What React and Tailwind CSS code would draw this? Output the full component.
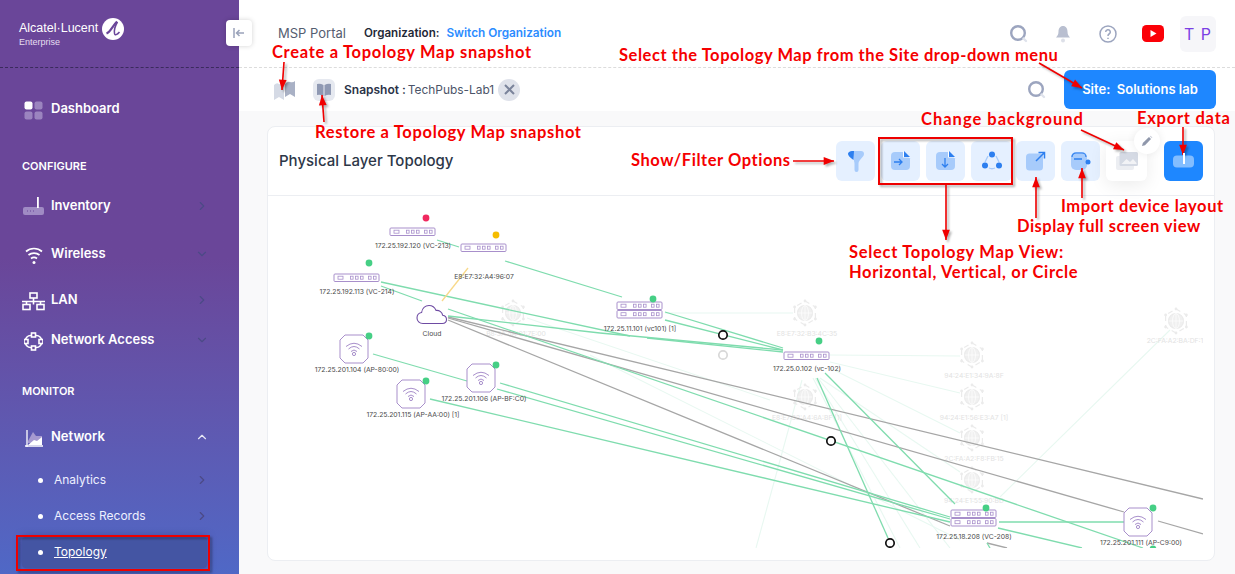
import React from "react";
import { ChevronRight, ChevronDown, ChevronUp } from "lucide-react";

const SW = "#a88fcb";
const GREEN = "#7fdcae";
const GRAY = "#a6a6a6";
const FAINT = "#e8f8f1";

function SwitchBox({ x, y }) {
  return (
    <g fill="none" stroke={SW} strokeWidth="1">
      <rect x={x} y={y} width="45" height="7.500" rx="1" fill="#fff" />
      <rect x={x + 4} y={y + 2.200} width="5" height="3" strokeWidth="0.800" />
      {[17, 22, 27, 35, 40].map((d) => (
        <rect key={d} x={x + d - 0.500} y={y + 2.200} width="2.600" height="3" strokeWidth="0.800" />
      ))}
    </g>
  );
}

function Ap({ cx, cy }) {
  const r = 14;
  const c = 5;
  return (
    <g fill="none" stroke={SW}>
      <path
        d={`M${cx - r + c} ${cy - r}H${cx + r - c}L${cx + r} ${cy - r + c}V${cy + r - c}L${cx + r - c} ${cy + r}H${cx - r + c}L${cx - r} ${cy + r - c}V${cy - r + c}Z`}
        fill="#fff"
        strokeWidth="1"
      />
      <path d={`M${cx - 8} ${cy - 2.500}Q${cx} ${cy - 9} ${cx + 8} ${cy - 2.500}`} strokeWidth="1" />
      <path d={`M${cx - 5.500} ${cy}Q${cx} ${cy - 5} ${cx + 5.500} ${cy}`} strokeWidth="1" />
      <path d={`M${cx - 3} ${cy + 2.500}Q${cx} ${cy - 0.500} ${cx + 3} ${cy + 2.500}`} strokeWidth="1" />
      <circle cx={cx} cy={cy + 5} r="1.600" strokeWidth="1" />
    </g>
  );
}

function Globe({ cx, cy }) {
  const pts = [0, 60, 120, 180, 240, 300].map((a) => {
    const t = ((a - 90) * Math.PI) / 180;
    return [cx + 12 * Math.cos(t), cy + 12 * Math.sin(t)];
  });
  return (
    <g fill="none" stroke="#ebebeb" strokeWidth="1.200">
      <circle cx={cx} cy={cy} r="7.500" fill="#f0f0f0" />
      <path d={`M${cx - 7.500} ${cy}H${cx + 7.500}M${cx} ${cy - 7.500}V${cy + 7.500}`} stroke="#fff" strokeWidth="0.700" />
      <ellipse cx={cx} cy={cy} rx="3.500" ry="7.500" stroke="#fff" strokeWidth="0.700" />
      <path d={pts.map((p, i) => `${i ? "L" : "M"}${p[0]} ${p[1]}`).join("") + "Z"} strokeDasharray="5 4" />
      {pts.map((p, i) => (
        <circle key={i} cx={p[0]} cy={p[1]} r="1.400" fill="#ebebeb" stroke="none" />
      ))}
    </g>
  );
}

function TopologyCanvas() {
  const green = [
    [437, 240, 459, 247],
    [505, 261, 622, 297],
    [381, 282, 630, 336],
    [647, 338, 783, 352],
    [381, 286, 422, 301],
    [448, 309, 1143, 548],
    [448, 316, 600, 333],
    [600, 333, 783, 350],
    [665, 312, 783, 348],
    [665, 320, 783, 350],
    [373, 354, 467, 381],
    [500, 383, 950, 517],
    [497, 389, 950, 519],
    [430, 399, 950, 522],
    [817, 378, 888, 538],
    [825, 373, 955, 504],
    [998, 528, 1082, 548],
    [987, 543, 990, 548],
  ];
  const gray = [
    [448, 317, 1203, 499],
    [448, 318, 1124, 512],
    [1158, 521, 1203, 534],
    [448, 320, 950, 526],
    [987, 543, 1007, 548],
  ];
  const faint = [
    [830, 355, 960, 356],
    [830, 362, 960, 393],
    [830, 368, 960, 433],
    [820, 378, 960, 472],
    [818, 378, 950, 548],
    [815, 378, 920, 548],
    [813, 378, 900, 548],
    [802, 380, 756, 548],
    [1000, 497, 1170, 330],
    [665, 313, 793, 313],
    [527, 318, 770, 400],
    [590, 355, 960, 540],
  ];
  const sw = [
    [390, 228, "172.25.192.120 (VC-213)", 413, 245, "#f0295f", 426, 218],
    [461, 244, "E8:E7:32:A4:96:07", 484, 276, "#f5bd00", 496, 235],
    [334, 274, "172.25.192.113 (VC-214)", 357, 291, "#46cf85", 369, 263],
    [784, 352, "172.25.0.102 (vc-102)", 807, 368, "#46cf85", 819, 341],
  ];
  const dbl = [
    [617, 302, "172.25.11.101 (vc101) [1]", 640, 328, 653, 299],
    [951, 510, "172.25.18.208 (VC-208)", 974, 536, 986, 508],
  ];
  const ap = [
    [354, 349, "172.25.201.104 (AP-80:00)", 357, 369, 369, 336],
    [481, 378, "172.25.201.106 (AP-BF:C0)", 484, 398, 496, 365],
    [411, 394, "172.25.201.115 (AP-AA:00) [1]", 413, 414, 426, 381],
    [1138, 522, "172.25.201.111 (AP-C9:00)", 1141, 542, 1153, 508],
  ];
  const globes = [
    [513, 313, "B8:3A:5A:01:7E:00", 516, 333],
    [805, 313, "E8:E7:32:B3:4C:35", 807, 333],
    [805, 397, "E8:E7:32:A4:6A:BF [1]", 807, 417],
    [972, 355, "94:24:E1:34:9A:8F", 974, 375],
    [972, 397, "94:24:E1:56:E3:A7 [1]", 974, 417],
    [972, 438, "2C:FA:A2:F8:FB:15", 974, 458],
    [972, 480, "94:24:E1:55:90:BD", 974, 500],
    [1176, 321, "2C:FA:A2:BA:DF:1", 1175, 340],
  ];
  const Label = ({ x, y, t, c = "#4a4a4a" }) => (
    <text x={x} y={y + 2.500} textAnchor="middle" fontSize="6.800" fill={c} fontFamily="Inter, sans-serif">
      {t}
    </text>
  );
  return (
    <svg viewBox="268 196 935 352" width="935" height="352" className="block">
      {faint.map((l, i) => (
        <line key={i} x1={l[0]} y1={l[1]} x2={l[2]} y2={l[3]} stroke={FAINT} strokeWidth="1.100" />
      ))}
      {globes.map((g) => (
        <g key={g[2]}>
          <Globe cx={g[0]} cy={g[1]} />
          <Label x={g[3]} y={g[4]} t={g[2]} c="#e2e2e2" />
        </g>
      ))}
      {gray.map((l, i) => (
        <line key={i} x1={l[0]} y1={l[1]} x2={l[2]} y2={l[3]} stroke={GRAY} strokeWidth="1.300" />
      ))}
      {green.map((l, i) => (
        <line key={i} x1={l[0]} y1={l[1]} x2={l[2]} y2={l[3]} stroke={GREEN} strokeWidth="1.300" />
      ))}
      <line x1="999" y1="522" x2="1124" y2="522" stroke={GREEN} strokeWidth="1.300" />
      <line x1="468" y1="268" x2="442" y2="301" stroke="#f8d98a" strokeWidth="1.300" />
      {sw.map((s) => (
        <g key={s[2]}>
          <SwitchBox x={s[0]} y={s[1]} />
          <Label x={s[3]} y={s[4]} t={s[2]} />
          <circle cx={s[6]} cy={s[7]} r="3.400" fill={s[5]} />
        </g>
      ))}
      {dbl.map((s) => (
        <g key={s[2]}>
          <SwitchBox x={s[0]} y={s[1]} />
          <SwitchBox x={s[0]} y={s[1] + 8.500} />
          <Label x={s[3]} y={s[4]} t={s[2]} />
          <circle cx={s[5]} cy={s[6]} r="3.400" fill="#46cf85" />
        </g>
      ))}
      {ap.map((s) => (
        <g key={s[2]}>
          <Ap cx={s[0]} cy={s[1]} />
          <Label x={s[3]} y={s[4]} t={s[2]} />
          <circle cx={s[5]} cy={s[6]} r="3.400" fill="#46cf85" />
        </g>
      ))}
      <circle cx="1153" cy="549" r="3.400" fill="#46cf85" />
      <path
        d="M423 323.500c-3.600 0-6-2.600-6-5.600 0-2.900 2-5 4.600-5.400.6-4 3.600-7 7.400-7 3.200 0 5.800 1.900 7 4.900 3.500-.4 6.200 1.900 6.700 4.900 2.700.4 3.800 2.400 3.800 4.300 0 2.200-1.700 3.900-4.200 3.900z"
        fill="#fff"
        stroke="#6e4ba3"
        strokeWidth="1.100"
      />
      <Label x={432} y={333} t="Cloud" />
      <circle cx="723" cy="335" r="4.200" fill="#fff" stroke="#111" strokeWidth="1.700" />
      <circle cx="723" cy="355" r="4.200" fill="#fff" stroke="#d8d8d8" strokeWidth="1.700" />
      <circle cx="831" cy="441" r="4.200" fill="#fff" stroke="#111" strokeWidth="1.700" />
      <circle cx="890" cy="543" r="4.200" fill="#fff" stroke="#111" strokeWidth="1.700" />
    </svg>
  );
}

function Row({ icon, label, chev, className = "" }) {
  return (
    <div className={`flex items-center h-10 pt-[2px] pl-[22px] pr-[30px] ${className}`}>
      <span className="w-[29px] flex shrink-0 translate-y-[1px]">{icon}</span>
      <span className="text-[13px] font-semibold text-white flex-1">{label}</span>
      {chev}
    </div>
  );
}

function SubRow({ label, chev, active }) {
  return (
    <div className={`flex items-center h-9 text-xs text-[#eef0ff] ${active ? "" : "pl-[38px] pr-[30px]"}`}>
      {active ? (
        <div className="flex items-center h-[31px] w-[185px] ml-[22px] pl-4 rounded bg-[#4455a3] shadow-[0_0_8px_rgba(40,40,90,0.5)]">
          <span className="w-[5px] h-[5px] rounded-full bg-white mr-[11px]" />
          <span className="underline text-white">{label}</span>
        </div>
      ) : (
        <>
          <span className="w-[5px] h-[5px] rounded-full bg-white mr-[11px]" />
          <span className="flex-1">{label}</span>
          {chev}
        </>
      )}
    </div>
  );
}

const cr = <ChevronRight size={14} strokeWidth={2} className="text-[#4c4a86]" />;
const cd = <ChevronDown size={14} strokeWidth={2} className="text-[#4c4a86]" />;

function SearchIcon() {
  return (
    <svg width="22" height="22" viewBox="0 0 22 22" fill="none">
      <circle cx="10" cy="10" r="6.800" stroke="#9ca5bf" strokeWidth="2.400" />
      <path d="M15.500 15.500l2.500 2.500" stroke="#dfe3ec" strokeWidth="2.400" strokeLinecap="round" />
    </svg>
  );
}

function ToolBtn({ children, className = "bg-[#e5f0ff]", w = "w-[39px]" }) {
  return <div className={`${w} h-[40px] rounded-md flex items-center justify-center shrink-0 ${className}`}>{children}</div>;
}

const A = "#2d7fef";
const L = "#a7cbfb";

function DocIcon({ dir }) {
  return (
    <svg width="20" height="20" viewBox="0 0 20 20" fill="none">
      <path d="M4 1h8.500L19 7.500V15a4 4 0 0 1-4 4H4a4 4 0 0 1-4-4V5a4 4 0 0 1 4-4z" fill={L} />
      <path d="M12 0l7.500 6.500H12z" fill="#fff" />
      <path d="M13 0l6 6h-6z" fill={A} />
      {dir === "r" ? (
        <path d="M3 11h8m-3-3l3 3-3 3" stroke={A} strokeWidth="1.300" />
      ) : (
        <path d="M9 7v9m-3-3l3 3 3-3" stroke={A} strokeWidth="1.300" />
      )}
    </svg>
  );
}

const labelCls =
  "absolute whitespace-nowrap text-[16.500px] leading-[18px] font-bold text-[#f50000] [font-family:Lato,sans-serif]";

function Notes() {
  const arrows = [
    [284, 62, 282, 90],
    [324, 122, 322, 95],
    [1039, 63, 1082, 88],
    [793, 161, 834, 161],
    [946, 185, 946, 240],
    [1036, 218, 1036, 177],
    [1082, 198, 1082, 168],
    [1081, 130, 1124, 150],
    [1183, 127, 1183, 155],
  ];
  const texts = [
    ["Create a Topology Map snapshot", "left-[272px] top-[43px] tracking-[0.7px]"],
    ["Select the Topology Map from the Site drop-down menu", "left-[619px] top-[46px] tracking-[0.55px]"],
    ["Restore a Topology Map snapshot", "left-[315px] top-[123px] tracking-[0.65px]"],
    ["Change background", "left-[921px] top-[110px] tracking-[1px]"],
    ["Export data", "left-[1137px] top-[109px] tracking-[0.75px]"],
    ["Show/Filter Options", "left-[631px] top-[151px] tracking-[0.55px]"],
    ["Import device layout", "left-[1061px] top-[197px] tracking-[0.6px]"],
    ["Display full screen view", "left-[1017px] top-[217px] tracking-[0.5px]"],
    ["Select Topology Map View:", "left-[849px] top-[243px] tracking-[0.7px]"],
    ["Horizontal, Vertical, or Circle", "left-[849px] top-[263px] tracking-[0.65px]"],
  ];
  return (
    <>
      <svg className="absolute left-0 top-0 pointer-events-none drop-shadow-[2px_2px_1px_rgba(0,0,0,0.3)]" width="1235" height="574" fill="none">
        {arrows.map((a, i) => {
          const ang = Math.atan2(a[3] - a[1], a[2] - a[0]);
          const s = 11;
          const w = 0.36;
          const p1 = [a[2] - s * Math.cos(ang - w), a[3] - s * Math.sin(ang - w)];
          const p2 = [a[2] - s * Math.cos(ang + w), a[3] - s * Math.sin(ang + w)];
          return (
            <g key={i}>
              <line x1={a[0]} y1={a[1]} x2={a[2]} y2={a[3]} stroke="#f00000" strokeWidth="1.600" />
              <polygon points={`${a[2]},${a[3]} ${p1[0]},${p1[1]} ${p2[0]},${p2[1]}`} fill="#f00000" />
            </g>
          );
        })}
        <rect x="879" y="138" width="133" height="46" stroke="#ee0000" strokeWidth="2" />
        <rect x="17" y="536" width="192" height="34" stroke="#ee0000" strokeWidth="2" />
      </svg>
      <div className="absolute left-[1183px] top-[153px] w-[1.500px] h-[11px] bg-white" />
      {texts.map((t) => (
        <div key={t[0]} className={`${labelCls} ${t[1]}`}>
          {t[0]}
        </div>
      ))}
    </>
  );
}

export default function App() {
  return (
    <div className="relative flex w-[1235px] h-[574px] overflow-hidden bg-white [font-family:Inter,sans-serif]">
      <aside className="w-[239px] shrink-0 flex flex-col bg-gradient-to-b from-[#6a4699] from-45% to-[#4f68c6]">
        <div className="h-[68px] shrink-0 border-b border-dashed border-[#3a2a5c] pl-[19px] pt-[18px] flex items-start gap-[4px]">
          <div className="[font-family:'Liberation_Sans',sans-serif] leading-none text-white">
            <div className="text-[12.500px] leading-[15px] mt-[3px]">Alcatel·Lucent</div>
            <div className="text-[9px] leading-[11px] text-[#e6dff0] mt-[1px]">Enterprise</div>
          </div>
          <svg width="22" height="22" viewBox="0 0 22 22" fill="none" stroke="#6a4699">
            <circle cx="11" cy="11" r="11" fill="#fff" stroke="none" />
            <path d="M4.500 15.500C8.500 14 10.500 8 15 3.500" strokeWidth="2.200" />
            <path d="M15.500 4c-2.500 4-3.500 8-3 11.500.3 2 2.500 1.500 5-1.500" strokeWidth="1.500" />
          </svg>
        </div>

        <Row
          className="mt-5"
          label="Dashboard"
          icon={
            <svg width="19" height="19" viewBox="0 0 19 19" className="ml-[2px]">
              <rect x="0.500" y="0.500" width="8" height="8" rx="2" fill="#fff" />
              <rect x="10.500" y="0.500" width="8" height="8" rx="2" fill="#9b84bf" />
              <rect x="0.500" y="10.500" width="8" height="8" rx="2" fill="#9b84bf" />
              <rect x="10.500" y="10.500" width="8" height="8" rx="2" fill="#9b84bf" />
            </svg>
          }
        />
        <div className="mt-[30px] h-4 pl-[22px] text-[11px] leading-4 font-semibold text-white">CONFIGURE</div>
        <Row
          className="mt-[11px]"
          label="Inventory"
          chev={cr}
          icon={
            <svg width="22" height="20" viewBox="0 0 22 20" className="ml-[1px]">
              <rect x="0" y="10" width="21" height="8" rx="2" fill="#a08bc4" />
              <rect x="14" y="0" width="1.800" height="11" fill="#fff" />
              <path d="M4 14h1M7 14h1M10 14h1" stroke="#6a4699" strokeWidth="1" />
            </svg>
          }
        />
        <Row
          className="mt-2"
          label="Wireless"
          chev={cd}
          icon={
            <svg width="18" height="19" viewBox="0 0 18 19" fill="none" stroke="#fff" strokeWidth="1.700" className="ml-[3px]">
              <path d="M1 5.500C5.500 1.500 12.500 1.500 17 5.500" />
              <path d="M3.500 9C6.500 6.500 11.500 6.500 14.500 9" />
              <path d="M6 12.500c1.700-1.400 4.300-1.400 6 0" />
              <circle cx="9" cy="16.500" r="1.500" fill="#fff" stroke="none" />
            </svg>
          }
        />
        <Row
          className="mt-[6px]"
          label="LAN"
          chev={cr}
          icon={
            <svg width="23" height="19" viewBox="0 0 23 19" fill="none" stroke="#fff" strokeWidth="1.600">
              <rect x="8" y="1" width="7" height="5" />
              <rect x="1" y="12.500" width="7" height="5" />
              <rect x="15" y="12.500" width="7" height="5" />
              <path d="M11.500 6v6.500M0 9.500h23M4.500 9.500v3M18.500 9.500v3" />
            </svg>
          }
        />
        <Row
          label="Network Access"
          chev={cd}
          icon={
            <svg width="19" height="19" viewBox="0 0 19 19" fill="none" stroke="#fff" strokeWidth="1.600" className="ml-[2px]">
              <rect x="1.500" y="3.500" width="16" height="12" rx="5" />
              <rect x="7.500" y="1" width="4" height="4" fill="#6a4a9e" />
              <rect x="7.500" y="14" width="4" height="4" fill="#6a4a9e" />
              <rect x="0" y="7.500" width="4" height="4" fill="#6a4a9e" />
              <rect x="15" y="7.500" width="4" height="4" fill="#6a4a9e" />
            </svg>
          }
        />
        <div className="mt-6 h-4 pl-[22px] text-[11px] leading-4 font-semibold text-white">MONITOR</div>
        <Row
          className="mt-[17px]"
          label="Network"
          chev={<ChevronUp size={14} strokeWidth={2} className="text-[#e6e6f5]" />}
          icon={
            <svg width="19" height="19" viewBox="0 0 19 19" className="ml-[3px]">
              <path d="M3 12L8 3l3 4h6v7H3z" fill="#a79ad0" />
              <path d="M3 16l6-5 3 1 5-4v8z" fill="#fff" />
              <path d="M2 1v17M0 17h18" stroke="#fff" strokeWidth="1.300" fill="none" />
            </svg>
          }
        />
        <div className="mt-[6px]">
          <SubRow label="Analytics" chev={cr} />
          <SubRow label="Access Records" chev={cr} />
          <SubRow label="Topology" active />
        </div>
      </aside>

      <main className="flex-1 min-w-0 flex flex-col">
        <header className="h-[68px] shrink-0 border-b border-dashed border-[#dcdcdc] flex items-center pl-[39px] pr-[19px] relative">
          <button className="absolute -left-[13px] top-[20px] w-[26px] h-[26px] rounded bg-white shadow-[0_0_5px_rgba(0,0,0,0.18)] flex items-center justify-center">
            <svg width="12" height="10" viewBox="0 0 12 10" fill="none" stroke="#9aa3ba" strokeWidth="1.500">
              <path d="M1 0v10M11 5H3.500M6.500 2L3.500 5l3 3" />
            </svg>
          </button>
          <span className="text-[13px] text-[#555d70]">MSP Portal</span>
          <span className="ml-[18px] text-[11.600px] font-semibold text-[#1f2937]">Organization:</span>
          <span className="ml-[7px] text-[11.800px] font-semibold text-[#2b8cff]">Switch Organization</span>
          <div className="ml-auto flex items-center">
            <span className="translate-x-[1px] flex">
              <SearchIcon />
            </span>
            <svg width="16" height="18" viewBox="0 0 16 18" className="ml-[26px]" fill="#b9bfd0">
              <path d="M8 1c-3 0-4.500 2.500-4.500 5.500 0 3-1 4.500-2.500 6h14c-1.500-1.500-2.500-3-2.500-6C12.500 3.500 11 1 8 1z" />
              <circle cx="8" cy="15.500" r="2" fill="#dde0e8" />
            </svg>
            <svg width="18" height="18" viewBox="0 0 18 18" className="ml-[28px]" fill="none" stroke="#9ca5bf" strokeWidth="1.500">
              <circle cx="9" cy="9" r="8" />
              <path d="M6.700 7a2.300 2.300 0 1 1 3.400 2c-.8.500-1.100 1-1.100 2M9 12.800v1.200" />
            </svg>
            <svg width="22" height="17" viewBox="0 0 22 17" className="ml-[25px]">
              <rect width="22" height="17" rx="4.500" fill="#fb0007" />
              <path d="M8.500 5v7l6-3.500z" fill="#fff" />
            </svg>
            <div className="ml-[16px] w-[36px] h-[36px] rounded-md bg-[#f6f6f9] flex items-center justify-center text-base text-[#7b3fe4] tracking-[1px]">
              T P
            </div>
          </div>
        </header>

        <div className="h-[43px] shrink-0 flex items-center pl-[34px] pr-[19px]">
          <svg width="23" height="22" viewBox="0 0 23 22">
            <path d="M1 6q3-3 5-1 2 1 5 1v15l-5-3-5 3z" fill="#d5dae5" />
            <path d="M12 5q3-3 5-2 3 1 5-1v16l-5-3-5 3z" fill="#a9b1c5" />
          </svg>
          <div className="ml-[17px] w-[22px] h-[22px] rounded-md bg-[#e6e9f0] flex items-center justify-center">
            <svg width="16" height="14" viewBox="0 0 16 14">
              <path d="M1 1q3-1 6.500 1v11Q4 11 1 12z" fill="#8f99b3" />
              <path d="M15 1q-3-1-6.500 1v11q3.500-2 6.500-1z" fill="#8f99b3" />
            </svg>
          </div>
          <span className="ml-[9px] text-xs font-semibold text-[#2b3348]">Snapshot :</span>
          <span className="ml-[2px] text-[11.900px] text-[#4b5468]">TechPubs-Lab1</span>
          <div className="ml-[4px] w-[22px] h-[22px] rounded-full bg-[#dfe2ea] flex items-center justify-center">
            <svg width="11" height="11" viewBox="0 0 11 11" stroke="#7b849b" strokeWidth="2">
              <path d="M1 1l9 9M10 1l-9 9" />
            </svg>
          </div>
          <div className="ml-auto flex items-center gap-[16px]">
            <SearchIcon />
            <div className="w-[152px] h-[39px] rounded-md bg-[#1e87ff] flex items-center justify-center text-[13px] font-semibold text-white">
              Site:&nbsp; Solutions lab
            </div>
          </div>
        </div>

        <div className="flex-1 min-h-0 bg-[#f9f9fa] pl-7 pr-5 pt-[15px]">
          <section className="h-[435px] rounded-lg border border-[#eceef2] bg-white overflow-hidden">
            <div className="h-[69px] border-b border-[#eceef2] flex items-center pl-[11px] relative">
              <h1 className="text-[15px] font-medium text-[#2d3748]">Physical Layer Topology</h1>
              <div className="ml-auto mr-[11px] flex items-center">
                <ToolBtn>
                  <svg width="18" height="21" viewBox="0 0 18 21">
                    <path d="M6 0h8a3 3 0 0 1 3 3c0 2-2 3.500-4 6-1 1.300-1.500 2-1.500 4v6a2 2 0 0 1-4 0v-6c0-1-.2-2-.5-3z" fill={L} />
                    <path d="M1 2.500C1.500 1 3 0 5 0h2L6.500 9C4 7 1 5 1 2.500z" fill={A} />
                  </svg>
                </ToolBtn>
                <div className="flex ml-[6px] gap-[6px]">
                  <ToolBtn><DocIcon dir="r" /></ToolBtn>
                  <ToolBtn><DocIcon dir="d" /></ToolBtn>
                  <ToolBtn w="w-[41px]">
                    <svg width="22" height="20" viewBox="0 0 22 20" fill="none">
                      <path d="M7 5 4 11M15 5l3 6M8 17q3 1.500 6 0" stroke={L} strokeWidth="1.300" />
                      <circle cx="11" cy="3.500" r="3" fill={A} />
                      <circle cx="4" cy="14.500" r="3" fill={A} />
                      <circle cx="18" cy="14.500" r="3" fill={A} />
                    </svg>
                  </ToolBtn>
                </div>
                <ToolBtn className="bg-[#e5f0ff] ml-1">
                  <svg width="20" height="20" viewBox="0 0 20 20" fill="none">
                    <rect x="0" y="2.500" width="17" height="17" rx="3.500" fill={L} />
                    <path d="M10 10l8.500-8.500M12.500 1.500h6v6" stroke={A} strokeWidth="1.500" />
                  </svg>
                </ToolBtn>
                <ToolBtn className="bg-[#e5f0ff] ml-[6px]">
                  <svg width="20" height="19" viewBox="0 0 20 19" fill="none">
                    <rect x="0" y="0" width="16" height="18" rx="5" fill={L} />
                    <path d="M1 5a4 4 0 0 1 4-4h6a4 4 0 0 1 4 4" stroke={A} strokeWidth="1.200" />
                    <path d="M3 7h8" stroke={A} strokeWidth="1.600" />
                    <circle cx="17" cy="10" r="2.500" fill={A} />
                  </svg>
                </ToolBtn>
                <div className="relative ml-[6px]">
                  <ToolBtn w="w-[41px]" className="bg-white shadow-[0_4px_18px_rgba(0,0,0,0.08)]">
                    <svg width="22" height="18" viewBox="0 0 22 18">
                      <rect x="0" y="4" width="18" height="14" rx="2" fill="#eceef2" />
                      <rect x="3.500" y="0" width="18.500" height="14" rx="1.500" fill="#d5dae4" />
                      <path d="M5.500 12l5-5 3.500 3 3-3 3.500 4v1z" fill="#f2f3f6" />
                    </svg>
                  </ToolBtn>
                  <div className="absolute -top-[13px] left-[28px] w-[26px] h-[26px] rounded-full bg-white shadow-[0_0_8px_rgba(0,0,0,0.08)] flex items-center justify-center">
                    <svg width="12" height="12" viewBox="0 0 12 12">
                      <path d="M1 11l.8-3L8 2l2 2-6 6.200z" fill="#8f97ab" />
                      <path d="M8.800 1.200l2 2 .6-.8-1.700-1.700z" fill="#c9cdd8" />
                    </svg>
                  </div>
                </div>
                <ToolBtn className="bg-[#1e87ff] ml-[17px]">
                  <svg width="21" height="13" viewBox="0 0 21 13">
                    <rect x="0" y="0.500" width="21" height="12" rx="4" fill="#ffffff" fillOpacity="0.45" />
                  </svg>
                </ToolBtn>
              </div>
            </div>
            <div className="pb-3">
              <TopologyCanvas />
            </div>
          </section>
        </div>
      </main>

      <Notes />
    </div>
  );
}
